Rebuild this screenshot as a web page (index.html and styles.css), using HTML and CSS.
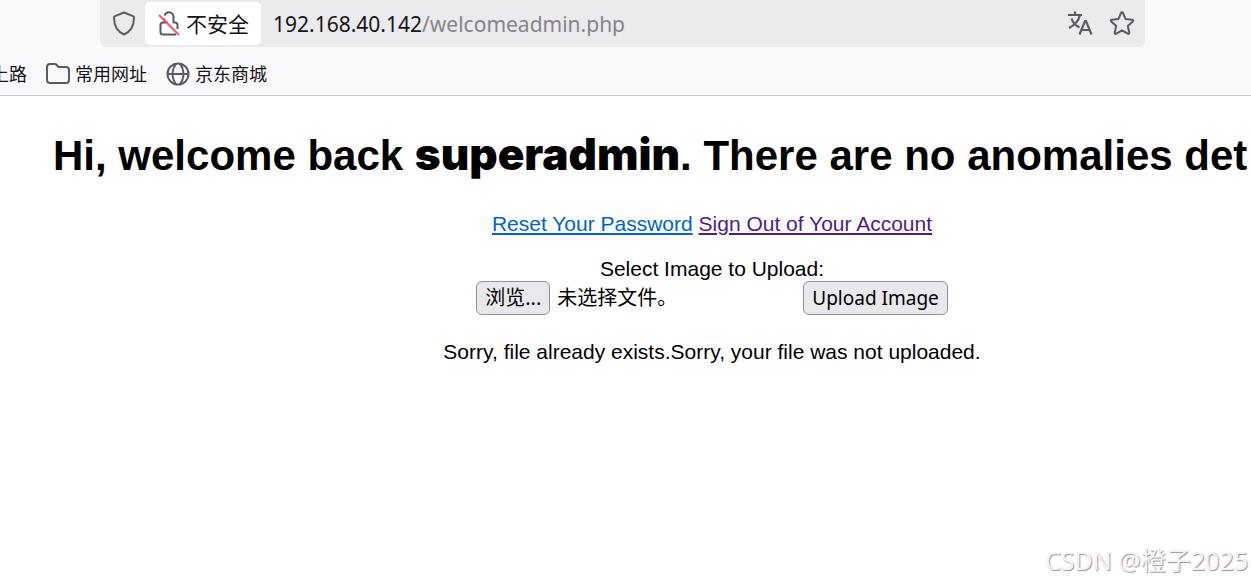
FILE: index.html
```
<!DOCTYPE html>
<html lang="zh-CN">
<head>
  <meta charset="UTF-8" />
  <meta name="viewport" content="width=device-width, initial-scale=1.0"/>
  <title>Welcome</title>
  <link rel="stylesheet" href="styles.css">
</head>
<body>
  <header class="browser">
    <div class="urlbar">
      <button class="icon-btn" type="button" aria-label="Tracking protection">
        <svg width="24" height="26" viewBox="0 0 24 26" fill="none" stroke="#5b5b66" stroke-width="2" stroke-linejoin="round"><path d="M12 1.500l9 3.600c.7.3 1 .8 1 1.500 0 7.400-2.600 13.900-10 16.900C4.600 20.500 2 14 2 6.600c0-.7.3-1.200 1-1.500z"/></svg>
      </button>
      <button class="security" type="button">
        <svg width="24" height="26" viewBox="0 0 24 26" fill="none" stroke="#5b5b66" stroke-width="2" stroke-linejoin="round">
          <path d="M7.500 4.500C8.300 2.500 9.700 1.300 12 1.300c2.800 0 4.500 2 4.500 4.500V11.500H18c1.500 0 2.500 1 2.500 2.500v4M11 11.500H6c-1.500 0-2.500 1-2.500 2.500v7c0 1.500 1 2.500 2.500 2.500h13M7.500 7.500v4"/>
          <path d="M2 4l20 20" stroke="#ff4f73"/>
        </svg>
        <span>不安全</span>
      </button>
      <label class="host" for="path">192.168.40.142</label>
      <input class="path" id="path" type="text" value="/welcomeadmin.php">
      <button class="icon-btn" type="button" aria-label="Translate">
        <svg width="26" height="26" viewBox="0 0 26 26" fill="none" stroke="#5b5b66" stroke-width="2.200"><path d="M1 4h14M8 .5V4M13 4c-1.500 6-5 10-11 13M4.500 7.500c1.500 4.500 4 7 8 9"/><path d="M12.500 23.500L18 10h1l5.500 13.500M14.500 19h8"/></svg>
      </button>
      <button class="icon-btn" type="button" aria-label="Bookmark this page">
        <svg width="26" height="26" viewBox="0 0 26 26" fill="none" stroke="#5b5b66" stroke-width="2" stroke-linejoin="round"><path d="M12 2c.4-.9 1.600-.9 2 0l2.600 6.100 6.600.6c1 .1 1.400 1.200.6 1.900l-5 4.400 1.500 6.500c.2 1-.8 1.700-1.600 1.200L13 19.300l-5.700 3.400c-.8.5-1.800-.2-1.600-1.200L7.200 15l-5-4.400c-.8-.7-.4-1.800.6-1.900l6.600-.6z"/></svg>
      </button>
    </div>
    <nav class="bookmarks">
      <a class="bookmark" href="#">上路</a>
      <a class="bookmark" href="#">
        <svg width="24" height="22" viewBox="0 0 24 22" fill="none" stroke="#5b5b66" stroke-width="2" stroke-linejoin="round"><path d="M1 4c0-1.700 1-3 3-3h4.500c1 0 1.700.3 2.300 1l1.700 2H20c1.700 0 3 1.300 3 3v10c0 1.700-1.300 3-3 3H4c-1.700 0-3-1.300-3-3z"/></svg>
        常用网址
      </a>
      <a class="bookmark" href="#">
        <svg width="24" height="24" viewBox="0 0 24 24" fill="none" stroke="#5b5b66" stroke-width="2"><circle cx="12" cy="12" r="10.500"/><path d="M1.500 12h21M10 1.500C5.500 8 5.500 16 10 22.500M14 1.500c4.500 6.500 4.500 14.500 0 21"/></svg>
        京东商城
      </a>
    </nav>
  </header>

  <main>
    <h1>Hi, welcome back <b>superadmin</b>. There are no anomalies det</h1>
    <p class="links">
      <a href="#" class="reset">Reset Your Password</a>
      <a href="#" class="signout">Sign Out of Your Account</a>
    </p>
    <form>
      <div>Select Image to Upload:</div>
      <div class="upload-row">
        <input class="file-input" type="file" id="fileToUpload">
        <label class="btn browse" for="fileToUpload">浏览...</label>
        <span class="file-name">未选择文件。</span>
        <button class="btn" type="submit">Upload Image</button>
      </div>
    </form>
    <p class="message">Sorry, file already exists.Sorry, your file was not uploaded.</p>
  </main>

  <footer class="watermark">CSDN @橙子2025</footer>
</body>
</html>
```
FILE: styles.css
```
body {
  font-family: "Liberation Sans", "Noto Sans CJK SC", sans-serif;
  font-size: 21px;
  line-height: 24px;
  color: #000;
  background-color: #fff;
  margin: 0;
  min-height: 100vh;
  display: flex;
  flex-direction: column;
  overflow: hidden;
}

button,
input {
  font: inherit;
  color: inherit;
  border: none;
  background: none;
  padding: 0;
}

svg {
  display: block;
  flex: none;
}

/* Browser toolbar */
.browser {
  background-color: #f9f9fb;
  border-bottom: 1px solid #ccccd0;
  font-family: "Noto Sans", "Noto Sans CJK SC", sans-serif;
  color: #15141a;
}

.urlbar {
  display: flex;
  align-items: center;
  height: 47px;
  box-sizing: border-box;
  margin: 0 106px 0 100px;
  padding: 0 10px 0 12px;
  background-color: #ebebed;
  border-radius: 0 0 6px 6px;
}

.security {
  display: flex;
  align-items: center;
  gap: 5px;
  height: 43px;
  margin: 0 12px 0 9px;
  padding: 0 12px;
  background-color: #fff;
  border-radius: 5px;
}

.path {
  flex: 1;
  min-width: 0;
  color: #85858a;
  outline: none;
}

.icon-btn + .icon-btn {
  margin-left: 16px;
}

.bookmarks {
  display: flex;
  gap: 19px;
  height: 48px;
  margin-left: -9px;
  font-size: 18px;
}

.bookmark {
  display: flex;
  align-items: center;
  gap: 5px;
  padding-top: 6px;
  color: inherit;
  text-decoration: none;
  white-space: nowrap;
}

/* Page content */
main {
  flex: 1;
  padding-left: 173px;
  text-align: center;
}

h1 {
  margin: 34px 0 32px -120px;
  font-size: 42px;
  line-height: 48px;
  text-align: left;
  white-space: nowrap;
}

h1 b {
  font-family: "Arial Black", Inter, sans-serif;
  font-size: 44px;
  font-weight: 900;
}

p {
  margin: 0;
}

.links a {
  text-underline-offset: 2px;
  text-decoration-thickness: 2px;
}

.reset {
  color: #0066cc;
}

.signout {
  color: #551a8b;
}

form {
  margin: 21px 0 25px;
}

.upload-row {
  display: flex;
  justify-content: center;
  align-items: center;
  font-family: "Noto Sans", "Noto Sans CJK SC", sans-serif;
  font-size: 20px;
}

.btn {
  padding: 4px 8px;
  background-color: #e9e9ed;
  border: 1px solid #8f8f9d;
  border-radius: 6px;
  font-size: 19px;
}

.browse {
  font-size: 20px;
}

.file-input {
  position: absolute;
  opacity: 0;
  width: 1px;
  height: 1px;
}

.file-name {
  width: 246px;
  margin-left: 7px;
  text-align: left;
}

.watermark {
  padding: 0 3px 10px;
  text-align: right;
  font-family: "Noto Sans", "Noto Sans CJK SC", sans-serif;
  font-size: 25px;
  color: #f4f4f4;
  text-shadow: 1px 1px 1px #999;
}
```
